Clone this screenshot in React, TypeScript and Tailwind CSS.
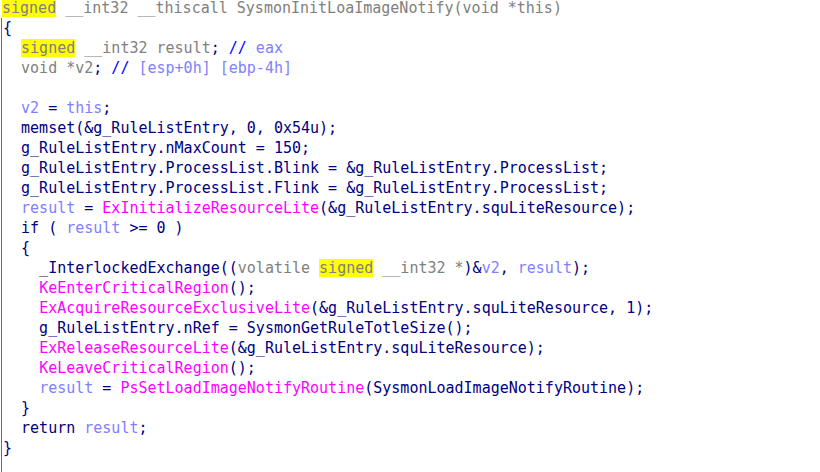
import React from 'react'

type Seg = [string, string]

const N = 'text-[#000080]'
const G = 'text-[#808080]'
const V = 'text-[#8080ff]'
const M = 'text-[#ff00ff]'
const C = 'text-[#0000ff]'
const H = 'text-[#808080] bg-[#ffff00]'

const header: Seg[] = [
  ['signed', H],
  [' __int32 __thiscall SysmonInitLoaImageNotify(void *this)', G],
]

const lines: Seg[][] = [
  [['{', N]],
  [['  ', N], ['signed', H], [' __int32 result', G], [';', N], [' //', C], [' eax', V]],
  [['  void *v2', G], [';', N], [' //', C], [' [esp+0h] [ebp-4h]', V]],
  [],
  [['  ', N], ['v2', V], [' = ', N], ['this', V], [';', N]],
  [['  memset(&g_RuleListEntry, 0, 0x54u);', N]],
  [['  g_RuleListEntry.nMaxCount = 150;', N]],
  [['  g_RuleListEntry.ProcessList.Blink = &g_RuleListEntry.ProcessList;', N]],
  [['  g_RuleListEntry.ProcessList.Flink = &g_RuleListEntry.ProcessList;', N]],
  [['  ', N], ['result', V], [' = ', N], ['ExInitializeResourceLite', M], ['(&g_RuleListEntry.squLiteResource);', N]],
  [['  if ( ', N], ['result', V], [' >= 0 )', N]],
  [['  {', N]],
  [
    ['    _InterlockedExchange((', N],
    ['volatile ', G],
    ['signed', H],
    [' __int32 *', G],
    [')&', N],
    ['v2', V],
    [', ', N],
    ['result', V],
    [');', N],
  ],
  [['    ', N], ['KeEnterCriticalRegion', M], ['();', N]],
  [['    ', N], ['ExAcquireResourceExclusiveLite', M], ['(&g_RuleListEntry.squLiteResource, 1);', N]],
  [['    g_RuleListEntry.nRef = SysmonGetRuleTotleSize();', N]],
  [['    ', N], ['ExReleaseResourceLite', M], ['(&g_RuleListEntry.squLiteResource);', N]],
  [['    ', N], ['KeLeaveCriticalRegion', M], ['();', N]],
  [['    ', N], ['result', V], [' = ', N], ['PsSetLoadImageNotifyRoutine', M], ['(SysmonLoadImageNotifyRoutine);', N]],
  [['  }', N]],
  [['  return ', N], ['result', V], [';', N]],
  [['}', N]],
]

function Line({ segs }: { segs: Seg[] }) {
  return (
    <div className="h-5 whitespace-pre">
      {segs.map(([t, c], i) => (
        <span key={i} className={c}>
          {t}
        </span>
      ))}
    </div>
  )
}

export default function App() {
  return (
    <div
      className="w-[820px] h-[472px] overflow-hidden bg-white text-[15px] leading-5"
      style={{ fontFamily: '"DejaVu Sans Mono", "Liberation Mono", monospace' }}
    >
      <div className="-mt-[2px] pl-[2px]">
        <Line segs={header} />
      </div>
      <div className="ml-px h-full border-l border-[#2b79d8] pl-px">
        {lines.map((segs, i) => (
          <Line key={i} segs={segs} />
        ))}
      </div>
    </div>
  )
}
